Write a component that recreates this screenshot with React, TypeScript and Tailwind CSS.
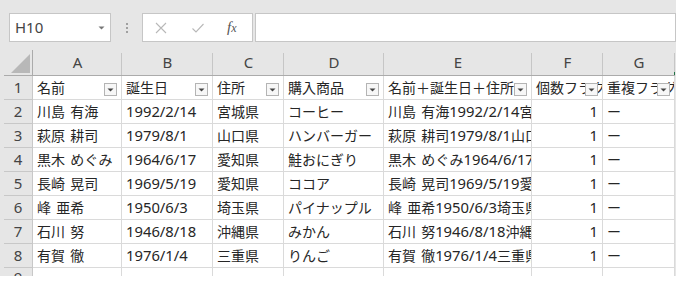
import React from 'react';

interface Person {
    name: string;
    birth: string;
    pref: string;
    item: string;
}

const people: Person[] = [
    { name: '川島 有海', birth: '1992/2/14', pref: '宮城県', item: 'コーヒー' },
    { name: '萩原 耕司', birth: '1979/8/1', pref: '山口県', item: 'ハンバーガー' },
    { name: '黒木 めぐみ', birth: '1964/6/17', pref: '愛知県', item: '鮭おにぎり' },
    { name: '長崎 晃司', birth: '1969/5/19', pref: '愛知県', item: 'ココア' },
    { name: '峰 亜希', birth: '1950/6/3', pref: '埼玉県', item: 'パイナップル' },
    { name: '石川 努', birth: '1946/8/18', pref: '沖縄県', item: 'みかん' },
    { name: '有賀 徹', birth: '1976/1/4', pref: '三重県', item: 'りんご' },
];

const letters = ['A', 'B', 'C', 'D', 'E', 'F', 'G'];
const headers = ['名前', '誕生日', '住所', '購入商品', '名前＋誕生日＋住所', '個数フラグ', '重複フラグ'];

const font = "font-['Noto_Sans','Noto_Sans_CJK_JP',sans-serif]";

const Txt = ({ s }: { s: string }) => (
    <>
        {s.split(/([0-9/]+)/).map((part, i) =>
            /^[0-9/]+$/.test(part) ? (
                <span key={i} className="text-[14.8px] font-['Noto_Sans',sans-serif]">{part}</span>
            ) : (
                <span key={i}>{part}</span>
            )
        )}
    </>
);

// small dropdown button of the autofilter
const FilterButton = () => (
    <span className="absolute right-[4px] top-[7px] w-[13px] h-[13px] border border-[#b4b4b4] bg-[#f7f7f7] flex items-center justify-center">
        <svg width="7" height="4" viewBox="0 0 7 4">
            <path d="M0.5 0.5 L6.5 0.5 L3.5 3.5 Z" fill="#444" />
        </svg>
    </span>
);

const cell = "relative overflow-hidden whitespace-nowrap border-r border-b border-[#dadada] bg-white text-[14px] text-[#262626] flex items-center px-[4px] [word-spacing:2px] font-['Noto_Sans_CJK_JP',sans-serif]";
const rowHead = 'border-r border-b border-[#c8c8c8] bg-[#e6e6e6] text-[15px] text-[#444] flex items-center justify-center';

const App = () => {
    return (
        <div className="w-[686px] h-[282px] bg-white">
            <div className={`w-[676px] h-[276px] bg-[#e6e6e6] overflow-hidden ${font}`}>
                {/* formula bar */}
                <div className="flex items-center h-[42px] pt-[13px]">
                    <div className="ml-[9px] w-[102px] h-[29px] bg-white border border-[#c6c6c6] flex items-center justify-between pl-[5px] pr-[5px]">
                        <span className="text-[15px] text-[#444]">H10</span>
                        <svg width="7" height="4" viewBox="0 0 7 4">
                            <path d="M0.5 0.5 L6.5 0.5 L3.5 3.5 Z" fill="#777" />
                        </svg>
                    </div>
                    <div className="w-[31px] flex flex-col items-center gap-[2px]">
                        <span className="w-[2px] h-[2px] bg-[#a0a0a0]" />
                        <span className="w-[2px] h-[2px] bg-[#a0a0a0]" />
                        <span className="w-[2px] h-[2px] bg-[#a0a0a0]" />
                    </div>
                    <div className="w-[111px] h-[29px] bg-white border border-[#c6c6c6] flex items-center pl-[11px]">
                        <svg width="14" height="14" viewBox="0 0 14 14">
                            <path d="M2 2 L12 12 M12 2 L2 12" stroke="#b8b8b8" strokeWidth="1.1" />
                        </svg>
                        <svg width="14" height="14" viewBox="0 0 14 14" className="ml-[23px]">
                            <path d="M1.5 7.5 L5 11 L12.5 3" stroke="#b8b8b8" strokeWidth="1.1" fill="none" />
                        </svg>
                        <span className="ml-[22px] text-[15px] italic text-[#555] font-['Liberation_Serif',serif]">
                            f<span className="text-[12px]">x</span>
                        </span>
                    </div>
                    <div className="ml-[2px] flex-1 h-[29px] bg-white border border-[#c6c6c6]" />
                </div>

                {/* sheet */}
                <div className="mt-[8px] pl-[4px] grid grid-cols-[29px_89px_91px_71px_100px_148px_71px_72px] grid-rows-[26px_repeat(8,24px)_8px]">
                    <div className="bg-[#e6e6e6] border-r border-b border-[#ababab] flex items-end justify-end p-[2px]">
                        <svg width="19" height="19" viewBox="0 0 19 19">
                            <path d="M19 0 L19 19 L0 19 Z" fill="#b8b8b8" />
                        </svg>
                    </div>
                    {letters.map((l, i) => (
                        <div key={l} className="relative bg-[#e6e6e6] border-b border-[#ababab] flex items-center justify-center text-[15px] text-[#444]">
                            {l}
                            <span className="absolute right-0 top-[3px] bottom-0 w-px bg-[#c6c6c6]" />
                            {i === 6 && <span className="absolute right-0 bottom-0 w-px h-[3px] bg-[#217346]" />}
                        </div>
                    ))}

                    <div className={rowHead}>1</div>
                    {headers.map((h) => (
                        <div key={h} className={cell}>
                            {h}
                            <FilterButton />
                        </div>
                    ))}

                    {people.map((p, i) => (
                        <React.Fragment key={p.name}>
                            <div className={rowHead}>{i + 2}</div>
                            <div className={cell}><Txt s={p.name} /></div>
                            <div className={cell}><Txt s={p.birth} /></div>
                            <div className={cell}>{p.pref}</div>
                            <div className={cell}>{p.item}</div>
                            <div className={cell}><Txt s={p.name + p.birth + p.pref} /></div>
                            <div className={`${cell} justify-end`}><Txt s="1" /></div>
                            <div className={cell}>ー</div>
                        </React.Fragment>
                    ))}

                    <div className="bg-[#e6e6e6] border-r border-[#c8c8c8] overflow-hidden flex justify-center text-[15px] text-[#444] leading-[19px]">9</div>
                    {letters.map((l) => (
                        <div key={'r9' + l} className="bg-white border-r border-[#dadada]" />
                    ))}
                </div>
            </div>
        </div>
    );
};

export default App;
